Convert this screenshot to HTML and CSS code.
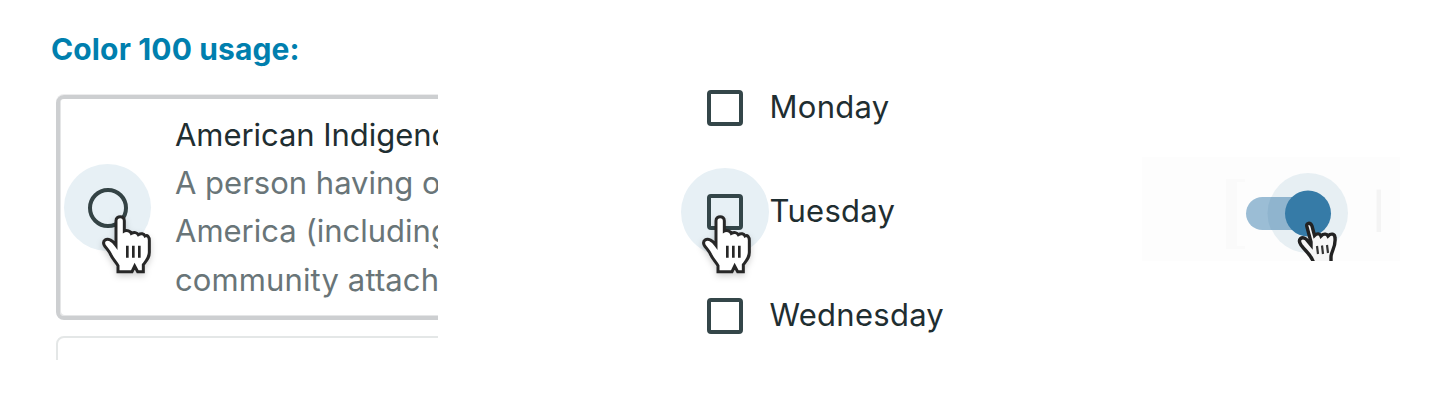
FILE: index.html
```html
<!DOCTYPE html>
<html lang="en">
<head>
<meta charset="utf-8">
<title>Color 100 usage</title>
<link rel="stylesheet" href="styles.css">
</head>
<body>
<svg width="0" height="0" class="defs">
  <symbol id="hand" viewBox="150 190 160 190">
    <path class="hand-outline" d="M198 282V213C198 197 223 197 223 213V244C231 240 241 244 244 251C252 247 261 248 265 255C273 250 282 252 285 259C293 255 298 262 298 272V308C298 324 291 331 280 345V366H263L254 349L246 366H204V348C198 338 188 328 182 315C176 301 168 296 162 285C157 273 169 265 181 271C189 274 193 280 198 287Z"/>
    <path class="hand-lines" d="M232 288V324M250 288V324M268 288V324"/>
  </symbol>
</svg>
<h1 class="title">Color 100 usage:</h1>
<main class="examples">
  <section class="radio-example">
    <article class="card">
      <div class="control">
        <span class="halo"><span class="radio"></span></span>
        <svg class="cursor"><use href="#hand"/></svg>
      </div>
      <div class="copy">
        <div class="copy-title">American Indigeno</div>
        <div>A person having o</div>
        <div>America (including</div>
        <div class="copy-last">community attach</div>
      </div>
    </article>
    <article class="card-next"></article>
  </section>
  <section class="days">
    <div class="day"><span class="slot"><span class="box"></span></span><span>Monday</span></div>
    <div class="day"><span class="slot halo"><span class="box"></span><svg class="cursor"><use href="#hand"/></svg></span><span>Tuesday</span></div>
    <div class="day"><span class="slot"><span class="box"></span></span><span>Wednesday</span></div>
  </section>
  <section class="toggle-example">
    <svg class="toggle" width="258" height="104" viewBox="1142 157 258 104">
      <path class="toggle-ground" d="M1142 157H1400V261H1142Z"/>
      <path class="toggle-frame" d="M1226 179H1245V182H1237V246H1245V249H1226Z"/>
      <path class="toggle-edge" d="M1376.500 189.500H1381V232H1376.500Z"/>
      <circle class="toggle-halo" cx="1308" cy="213" r="40"/>
      <rect class="toggle-track" x="1246" y="197" width="76" height="33" rx="16.500"/>
      <path class="toggle-overlap" d="M1271 197H1300V230H1271Q1264 213 1271 197Z"/>
      <circle class="toggle-knob" cx="1308" cy="213.500" r="23"/>
      <g class="toggle-hand">
        <path class="small-outline" d="M1311 242L1307 227C1305.500 222.500 1310.500 222 1312 226L1314.500 235.500C1317 233 1320 233.500 1321 236C1324 233 1327 234 1328 236C1331 233 1335 233.500 1335 238C1336 248 1331 251 1331 257V264H1314C1312 255 1306 252 1301 245C1297 239 1302 236 1306 239L1311 245Z"/>
        <path class="small-lines" d="M1317 246L1318 254M1322 245.500L1323 254M1327 245L1328 253"/>
      </g>
    </svg>
  </section>
</main>
</body>
</html>
```
FILE: styles.css
```css
* { box-sizing: border-box; }
body { margin: 0; width: 1455px; height: 417px; overflow: hidden; background: #fff; font-family: Inter, "Liberation Sans", sans-serif; color: #1f2e31; }
.defs { position: absolute; }
.title { margin: 0; padding: 31px 0 0 51px; height: 90px; font-size: 30px; line-height: 37px; font-weight: 700; letter-spacing: .13px; color: #007fae; }
.examples { display: flex; height: 270px; }
.radio-example { width: 438px; height: 270px; padding: 5px 0 0 56px; overflow: hidden; }
.card { display: flex; width: 420px; height: 225px; border: 4px solid #cdcfd1; border-radius: 8px; box-shadow: 0 -1px 0 #ececed, inset 1px -1px 0 #e5e6e7; }
.control { position: relative; width: 115px; padding: 65px 0 0 4px; flex: none; }
.control .cursor { left: 40px; top: 114px; }
.halo { display: flex; align-items: center; justify-content: center; width: 87px; height: 87px; border-radius: 50%; background: #e7f0f5; }
.radio { width: 40px; height: 40px; border: 4px solid #344345; border-radius: 50%; }
.cursor { position: absolute; width: 53.33px; height: 63.33px; overflow: visible; filter: drop-shadow(0 3px 3px rgba(0,0,0,.18)); }
.hand-outline { fill: #fff; stroke: #272727; stroke-width: 9; stroke-linejoin: miter; }
.hand-lines { fill: none; stroke: #272727; stroke-width: 8; }
.copy { padding-top: 11.6px; font-size: 31px; line-height: 48.2px; white-space: nowrap; color: #697578; letter-spacing: 0; }
.copy-title { color: #1f2e31; letter-spacing: -.05px; }
.copy-last { padding-top: .7px; letter-spacing: .12px; }
.card-next { width: 420px; height: 60px; margin-top: 16px; border: 2px solid #e4e7e7; border-radius: 8px; }
.days { width: 562px; padding-left: 243px; height: 270px; margin-top: -35px; }
.day { display: flex; height: 104px; align-items: center; font-size: 31px; line-height: 40px; letter-spacing: .27px; }
.slot { position: relative; display: flex; align-items: center; justify-content: center; width: 88px; height: 88px; padding-top: 1px; margin-right: .5px; flex: none; }
.slot.halo { padding-top: 0; margin-top: 1px; }
.slot .cursor { left: 19px; top: 45px; }
.box { width: 36px; height: 36px; border: 4px solid #344649; border-radius: 4px; }
.toggle-example { padding: 67px 0 0 142px; }
.toggle { display: block; filter: blur(.4px); }
.toggle-ground { fill: #fdfdfd; }
.toggle-frame { fill: #fafafa; }
.toggle-edge { fill: #f4f4f4; }
.toggle-halo { fill: #e7eff3; }
.toggle-track { fill: #9bbdd5; }
.toggle-overlap { fill: #8fb4ce; }
.toggle-knob { fill: #367ba7; }
.small-outline { fill: #f6f6f6; stroke: #222; stroke-width: 3.4; }
.small-lines { fill: none; stroke: #333; stroke-width: 2.2; }
```
